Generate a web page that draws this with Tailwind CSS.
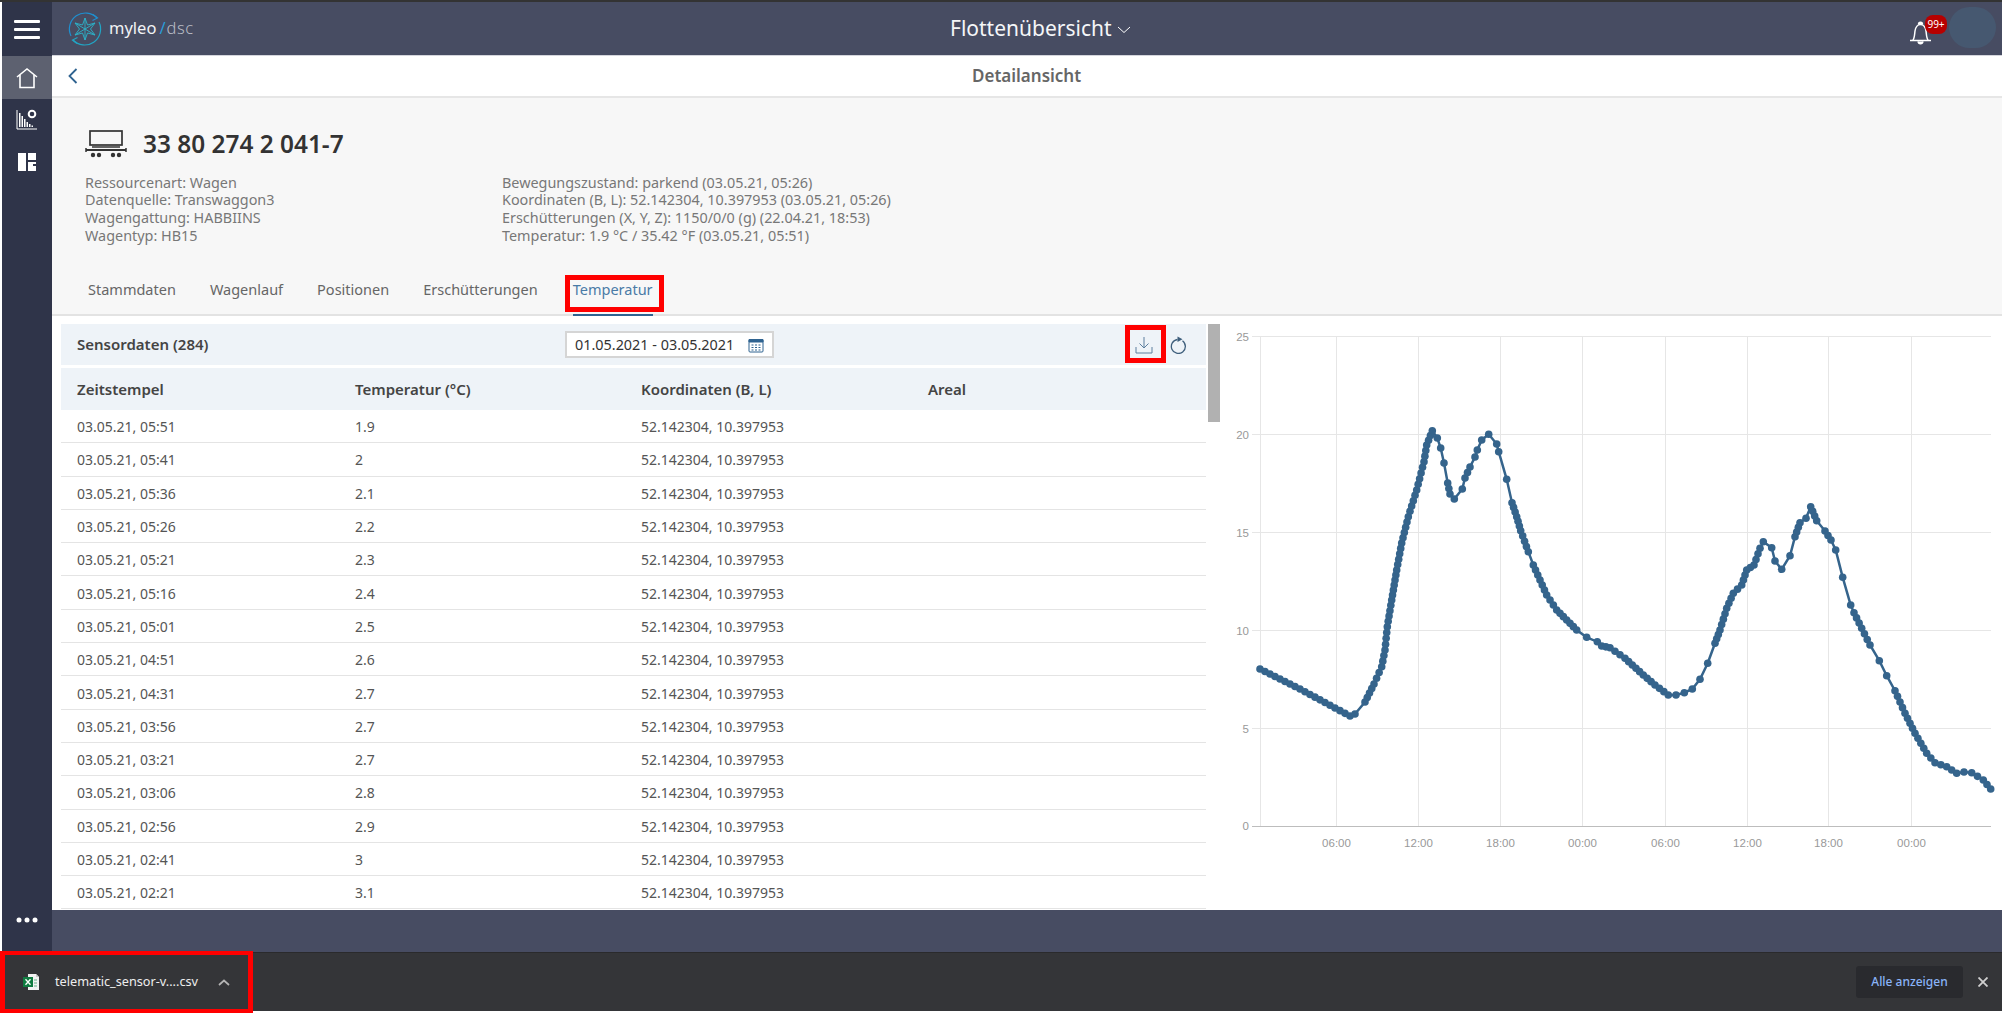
<!DOCTYPE html>
<html lang="de">
<head>
  <meta charset="UTF-8" />
  <title>Detailansicht</title>
  <script src="https://cdn.jsdelivr.net/npm/@tailwindcss/browser@4"></script>
</head>
<body class="w-[2002px] h-[1014px] overflow-hidden bg-white font-['Noto_Sans',sans-serif] text-[14px]">
  <div class="h-[2px] bg-[#333333]"></div>

  <div class="flex h-[950px] pl-[2px]">
    <!-- Sidebar -->
    <aside class="w-[50px] shrink-0 flex flex-col bg-[#2f3449] text-white">
      <div class="h-[53px] flex items-center justify-center">
        <svg width="28" height="22" viewBox="0 0 28 22" fill="#ffffff"><rect x="1" y="2" width="26" height="3" rx="1"/><rect x="1" y="10" width="26" height="3" rx="1"/><rect x="1" y="18" width="26" height="3" rx="1"/></svg>
      </div>
      <div class="h-[43px] mt-[1px] bg-[#5d6170] flex items-center justify-center">
        <svg width="24" height="22" viewBox="0 0 24 22" fill="none" stroke="#ffffff" stroke-width="1.6"><path d="M2 10 12 2l10 8"/><path d="M5 8v12.5h14V8"/></svg>
      </div>
      <div class="h-[42px] flex items-center justify-center">
        <svg width="22" height="22" viewBox="0 0 22 22" fill="#ffffff"><path d="M1 1v19h20" fill="none" stroke="#ffffff" stroke-width="1"/><path d="M3 18V4h1.500v14zM5.500 18V7H7v11zM8 18v-8h1.500v8zM10.500 18v-5H12v5zM13 18v-3h1.500v3zM15.500 18v-1.500H17V18z"/><circle cx="16" cy="5" r="3.300" fill="none" stroke="#ffffff" stroke-width="2"/></svg>
      </div>
      <div class="h-[42px] flex items-center justify-center">
        <svg width="18" height="18" viewBox="0 0 18 18" fill="#ffffff"><path d="M0 0h8v18H0zM10 0h8v7h-8zM10 9h8v2h-3v2h3v5h-8z"/></svg>
      </div>
      <div class="mt-auto h-[62px] pt-[27px] flex justify-center">
        <svg width="22" height="6" viewBox="0 0 22 6" fill="#ffffff"><circle cx="3" cy="3" r="2.500"/><circle cx="11" cy="3" r="2.500"/><circle cx="19" cy="3" r="2.500"/></svg>
      </div>
    </aside>

    <div class="flex-1 min-w-0 flex flex-col">
      <!-- Header -->
      <header class="h-[54px] shrink-0 bg-[#474c62] border-b border-[#d4d5dc] flex items-center relative text-white">
        <div class="flex items-center pl-[15px]">
          <svg width="36" height="36" viewBox="0 0 36 36" fill="none">
            <path d="M4 25A16 16 0 0 1 30 7" stroke="#1f8fcf" stroke-width="1.200"/>
            <path d="M26 3.500l4.500 3.500-5 2.500" stroke="#1f8fcf" stroke-width="1.200"/>
            <path d="M32 11A16 16 0 0 1 6 29" stroke="#22a5c4" stroke-width="1.200"/>
            <path d="M10 32.500 5.500 29l5-2.500" stroke="#22a5c4" stroke-width="1.200"/>
            <path d="M18 7l2.500 7 7.500-2-4.500 6 4.500 6-7.500-2-2.500 7-2.500-7-7.500 2 4.500-6-4.500-6 7.500 2zM18 7v22M8 12l20 12M28 12 8 24" stroke="#2bb3c9" stroke-width="0.900"/>
          </svg>
          <span class="ml-[6px] text-[16.500px] text-[#f2f3f5]">myleo</span>
          <span class="ml-[3px] text-[16.500px] text-[#2a9bd8]">/</span>
          <span class="ml-[1px] text-[16.500px] text-[#b9bcc6] tracking-[0.500px] font-light">dsc</span>
        </div>
        <div class="absolute left-[898px] top-[11px] flex items-center text-[21px] leading-[30px] text-[#f5f6f8]">
          Flottenübersicht
          <svg class="ml-[5px] mt-[3px]" width="14" height="8" viewBox="0 0 14 8" fill="none" stroke="#ffffff" stroke-width="1"><path d="M1 1l6 5.500L13 1"/></svg>
        </div>
        <div class="ml-auto relative w-[95px] h-full">
          <svg class="absolute left-[1px] top-[18px]" width="26" height="26" viewBox="0 0 26 26" fill="none" stroke="#ffffff" stroke-width="1.500"><path d="M2 20.500h21M5 20c1.500-2 1.500-5 2-9 .5-4 3-6.500 5.500-6.500S17.500 7 18 11c.5 4 .5 7 2 9"/><path d="M10.500 4.500c0-3 4-3 4 0" fill="#ffffff"/><path d="M10 21.500c.5 3 4.500 3 5 0" fill="#ffffff"/></svg>
          <span class="absolute left-[18px] top-[13px] w-[22px] h-[19px] rounded-[8px] bg-[#b70000] text-white text-[10px] leading-[19px] text-center">99+</span>
          <span class="absolute left-[42px] top-[5px] w-[47px] h-[41px] rounded-full bg-[#465870]"></span>
        </div>
      </header>

      <!-- Sub bar -->
      <div class="h-[42px] shrink-0 bg-white border-b-2 border-[#e6e6e6] flex items-center relative">
        <svg class="ml-[16px]" width="10" height="16" viewBox="0 0 10 16" fill="none" stroke="#2f6390" stroke-width="1.800"><path d="M8.500 1 1.500 8l7 7"/></svg>
        <span class="absolute left-[920px] top-[7px] text-[#666666] font-semibold text-[17px]">Detailansicht</span>
      </div>

      <!-- Info -->
      <section class="h-[218px] shrink-0 bg-[#f7f7f7] border-b-2 border-[#e3e3e3] relative">
        <div class="flex items-center h-[28px] mt-[32px] pl-[33px]">
          <svg width="42" height="28" viewBox="0 0 42 28" fill="none" stroke="#333333" stroke-width="1.700"><rect x="5" y="1" width="32" height="14"/><path d="M7 17h28" stroke-width="1.500"/><path d="M1 20h40" stroke-width="2"/><path d="M1 18v4M41 18v4" stroke-width="1.500"/><g fill="#333333" stroke="none"><circle cx="8" cy="25" r="2.200"/><circle cx="14" cy="25" r="2.200"/><circle cx="28" cy="25" r="2.200"/><circle cx="34" cy="25" r="2.200"/></g></svg>
          <h1 class="ml-[16px] text-[24.400px] font-semibold text-[#333333]">33 80 274 2 041-7</h1>
        </div>
        <div class="flex mt-[15.500px] pl-[33px] text-[14.400px] leading-[17.700px] text-[#777777]">
          <div class="w-[417px]">
            <div>Ressourcenart: Wagen</div>
            <div>Datenquelle: Transwaggon3</div>
            <div>Wagengattung: HABBIINS</div>
            <div>Wagentyp: HB15</div>
          </div>
          <div>
            <div>Bewegungszustand: parkend (03.05.21, 05:26)</div>
            <div>Koordinaten (B, L): 52.142304, 10.397953 (03.05.21, 05:26)</div>
            <div>Erschütterungen (X, Y, Z): 1150/0/0 (g) (22.04.21, 18:53)</div>
            <div>Temperatur: 1.9 °C / 35.42 °F (03.05.21, 05:51)</div>
          </div>
        </div>
        <nav class="absolute left-[36px] bottom-[-2px] flex gap-[34px] text-[14.500px] text-[#666666]">
          <span class="h-[39px] pt-[2px]">Stammdaten</span>
          <span class="h-[39px] pt-[2px]">Wagenlauf</span>
          <span class="h-[39px] pt-[2px]">Positionen</span>
          <span class="h-[39px] pt-[2px]">Erschütterungen</span>
          <span class="h-[39px] pt-[2px] text-[#4a7ba6] border-b-2 border-[#2f6390] ml-[1px] relative">
            Temperatur
            <i class="absolute left-[-8px] top-[-2px] w-[99px] h-[37px] border-[5px] border-[#ff0000]"></i>
          </span>
        </nav>
      </section>

      <!-- Content -->
      <main class="flex-1 min-h-0 overflow-hidden flex bg-white">
        <div class="w-[1156px] shrink-0 pl-[9px] pr-[2px] pt-[8px]">
          <div class="h-[41px] bg-[#eef3f8] flex items-center pl-[16px] relative">
            <span class="w-[488px] font-semibold text-[15px] text-[#444444]">Sensordaten (284)</span>
            <span class="w-[209px] h-[27px] border-2 border-[#d5d5d5] bg-white flex items-center pl-[8px] pr-[8px] justify-between text-[14.400px] text-[#333333]">
              01.05.2021 - 03.05.2021
              <svg width="16" height="16" viewBox="0 0 16 16" fill="none" stroke="#2f6390"><rect x="1" y="2.500" width="14" height="12.500" rx="1"/><path d="M1 2.500h14V5H1z" fill="#2f6390"/><path d="M3.500 8h2M7 8h2M10.500 8h2M3.500 10.500h2M7 10.500h2M10.500 10.500h2M3.500 13h2M7 13h2M10.500 13h2" stroke-width="1.200"/></svg>
            </span>
            <span class="ml-auto flex items-center pr-[18px] gap-[17px] relative">
              <svg width="18" height="18" viewBox="0 0 18 18" fill="none" stroke="#5c7f9e" stroke-width="1"><path d="M9 1v11M4.500 7.500 9 12l4.500-4.500M1 11v6h16v-6"/></svg>
              <svg width="18" height="18" viewBox="0 0 18 18" fill="none" stroke="#3f5f7c" stroke-width="1.300"><path d="M12.500 4.800a7 7 0 1 1-5-1.300"/><path d="M7.500 0.500 12.500 3.300 7.500 6z" fill="#3f5f7c" stroke="none"/></svg>
              <i class="absolute left-[-10px] top-[-11px] w-[41px] h-[38px] border-[5px] border-[#ff0000]"></i>
            </span>
          </div>
          <div id="table" class="mt-[3px]">
            <div class="grid grid-cols-[278px_286px_287px_1fr] h-[42px] items-center pl-[16px] bg-[#eef3f8] font-semibold text-[15px] text-[#444444]">
              <span>Zeitstempel</span><span>Temperatur (°C)</span><span>Koordinaten (B, L)</span><span>Areal</span>
            </div>
          </div>
        </div>
        <div class="w-[12px] h-[98px] mt-[8px] bg-[#b1b1b1] shrink-0"></div>
        <svg id="chart" class="shrink-0" width="782" height="594" viewBox="1220 316 782 594"></svg>
      </main>

      <div class="h-[42px] shrink-0 bg-[#474c62]"></div>
    </div>
  </div>

  <!-- Download bar -->
  <footer class="h-[59px] bg-[#343538] border-t border-[#2a2a2c] flex items-center relative text-white">
    <svg class="ml-[22px]" width="18" height="18" viewBox="0 0 18 18"><path d="M6 1h8l3 3v13H6z" fill="#f3f3f3"/><path d="M14 1v3h3z" fill="#c9c9c9"/><rect x="1" y="4" width="10" height="10" fill="#107c41"/><path d="M3.500 6.200 8.500 11.800M8.500 6.200 3.500 11.800" stroke="#ffffff" stroke-width="1.300"/><path d="M12 7h3M12 10h3M12 13h3" stroke="#6bb38c" stroke-width="1.200"/></svg>
    <span class="ml-[15px] w-[146px] whitespace-nowrap text-[12.700px] text-[#eeeeee]">telematic_sensor-v....csv</span>
    <svg class="ml-[17px]" width="12" height="7" viewBox="0 0 12 7" fill="none" stroke="#b4b4b4" stroke-width="1.700"><path d="M1 6l5-4.500L11 6"/></svg>
    <i class="absolute left-0 top-[-2px] w-[253px] h-[62px] border-x-[5px] border-y-[4px] border-[#ff0000]"></i>
    <span class="ml-auto w-[107px] h-[32px] rounded-[3px] bg-[#292a2e] text-[#8ab4f8] text-[12px] font-medium flex items-center justify-center">Alle anzeigen</span>
    <svg class="ml-[15px] mr-[14px]" width="10" height="10" viewBox="0 0 10 10" fill="none" stroke="#d0d0d0" stroke-width="1.800"><path d="M0.500 0.500l9 9M9.500 0.500l-9 9"/></svg>
  </footer>

  <script>
    const rows = [
      ["05:51", "1.9"], ["05:41", "2"], ["05:36", "2.1"], ["05:26", "2.2"], ["05:21", "2.3"],
      ["05:16", "2.4"], ["05:01", "2.5"], ["04:51", "2.6"], ["04:31", "2.7"], ["03:56", "2.7"],
      ["03:21", "2.7"], ["03:06", "2.8"], ["02:56", "2.9"], ["02:41", "3"], ["02:21", "3.1"]
    ];
    document.getElementById("table").insertAdjacentHTML("beforeend", rows.map(r => `
      <div class="grid grid-cols-[278px_286px_287px_1fr] h-[33.300px] pt-[1px] items-center pl-[16px] border-b border-[#e4e4e4] text-[14px] text-[#555555]">
        <span>03.05.21, ${r[0]}</span><span>${r[1]}</span><span>52.142304, 10.397953</span><span></span>
      </div>`).join(""));

    // key points of the curve, third value 1 = no extra dots up to the next point
    const pts = [
      [1260,669],[1300,689],[1335,708],[1350,716],[1355,714,1],[1365,702],[1374,684],[1381.7,666.7],
      [1385,650],[1387.3,626.7],[1391.7,600],[1396.7,570],[1401.7,543],[1408.3,516.7],[1416.7,490],
      [1424,461.7],[1426.7,445],[1432.3,430.7,1],[1437.3,438,1],[1440.7,448,1],[1444,463,1],[1447.7,483],
      [1450,494,1],[1454.3,499,1],[1462.3,489,1],[1465,478],[1470,467,1],[1475,457,1],[1477.3,450,1],
      [1481.7,440,1],[1488.7,434.3,1],[1496.7,444,1],[1498.7,451.7,1],[1506.7,479.3,1],[1512,502.7],
      [1516.7,516.7],[1520.7,530.7,1],[1522.7,536],[1528.3,551.7,1],[1533.3,565],[1540,580],[1546.7,595],
      [1556.7,610],[1566.7,620],[1576.7,630,1],[1586.7,637.3,1],[1597.3,641.7],[1601.7,646],[1610,647.7],
      [1625,658.3],[1643.3,675],[1655,685],[1668.3,695,1],[1676,695,1],[1684.3,692.7,1],[1692.3,689,1],
      [1700,679.3,1],[1707.7,663.3,1],[1715,643.3],[1720,630],[1726.7,608.3],[1733.3,593.3],[1741.7,585],
      [1746.7,570],[1754,565],[1760,548.3],[1763.3,541.7,1],[1771.7,547.7,1],[1775,561,1],[1781.7,569.3,1],
      [1790,555.7,1],[1795,536.7],[1800,522.7],[1806,518.3,1],[1810.7,506.7],[1816.7,520.7,1],[1825,531],
      [1831,540,1],[1835.7,550,1],[1842.7,577.3,1],[1850.7,605,1],[1854,612.7],[1861.7,628.3],[1870,645,1],
      [1879.3,660.7,1],[1886.7,675.7,1],[1895,690.7],[1905,713.3],[1915,733.3],[1926.7,753.3],[1935,762.7],
      [1946.7,766.7],[1956.7,773.3,1],[1964,772,1],[1971.7,772.7],[1983.3,780],[1990.7,789]
    ];

    let svg = "";
    const line = (x1, y1, x2, y2, c) => `<line x1="${x1}" y1="${y1}" x2="${x2}" y2="${y2}" stroke="${c}" />`;
    const text = (x, y, a, t) => `<text x="${x}" y="${y}" text-anchor="${a}" font-family="Liberation Sans" font-size="11.500" fill="#999999">${t}</text>`;
    [[25,336.5],[20,434.5],[15,532.5],[10,630.5],[5,728.5]].forEach(([v, y]) => {
      svg += line(1252, y, 1991, y, "#e6e6e6") + text(1249, y + 4, "end", v);
    });
    svg += text(1249, 830, "end", 0);
    [1260.5,1336.5,1418.5,1500.5,1582.5,1665.5,1747.5,1828.5,1911.5].forEach(x => {
      svg += line(x, 336, x, 826, "#e6e6e6");
    });
    svg += line(1252, 826.5, 1991, 826.5, "#bdbdbd");
    [["06:00",1336.5],["12:00",1418.5],["18:00",1500.5],["00:00",1582.5],["06:00",1665.5],["12:00",1747.5],["18:00",1828.5],["00:00",1911.5]].forEach(([t, x]) => {
      svg += text(x, 847, "middle", t);
    });

    svg += `<polyline fill="none" stroke="#35648c" stroke-width="2.500" points="${pts.map(p => p[0] + "," + p[1]).join(" ")}" />`;
    pts.forEach((p, i) => {
      svg += `<circle cx="${p[0]}" cy="${p[1]}" r="3.800" fill="#35648c" />`;
      const n = pts[i + 1];
      if (!n || p[2]) return;
      const len = Math.hypot(n[0] - p[0], n[1] - p[1]);
      const steps = Math.round(len / 5.5);
      for (let k = 1; k < steps; k++) {
        svg += `<circle cx="${p[0] + (n[0] - p[0]) * k / steps}" cy="${p[1] + (n[1] - p[1]) * k / steps}" r="3.800" fill="#35648c" />`;
      }
    });
    document.getElementById("chart").innerHTML = svg;
  </script>
</body>
</html>
